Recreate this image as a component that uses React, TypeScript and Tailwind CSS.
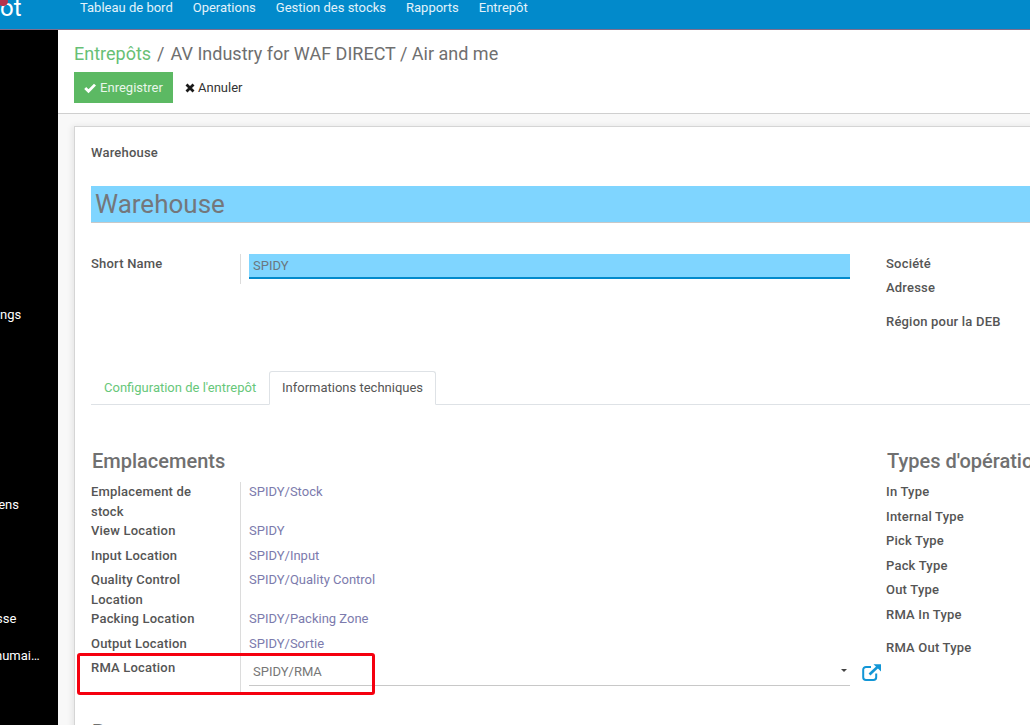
const leftRows = [
    {label: "Emplacement de stock", value: "SPIDY/Stock", height: "h-[39px]"},
    {label: "View Location", value: "SPIDY", height: "h-[25px]"},
    {label: "Input Location", value: "SPIDY/Input", height: "h-[24px]"},
    {label: "Quality Control Location", value: "SPIDY/Quality Control", height: "h-[39px]"},
    {label: "Packing Location", value: "SPIDY/Packing Zone", height: "h-[25px]"},
    {label: "Output Location", value: "SPIDY/Sortie", height: "h-[24px]"},
];

const typeRows = [
    {label: "In Type", height: "h-[25px]"},
    {label: "Internal Type", height: "h-[24px]"},
    {label: "Pick Type", height: "h-[25px]"},
    {label: "Pack Type", height: "h-[24px]"},
    {label: "Out Type", height: "h-[25px]"},
    {label: "RMA In Type", height: "h-[33px]"},
    {label: "RMA Out Type", height: "h-[24px]"},
];

const navItems = ["Tableau de bord", "Operations", "Gestion des stocks", "Rapports", "Entrepôt"];

function Sidebar() {
    return (
        <aside className="w-[58px] shrink-0 bg-black text-white text-[13px] leading-[20px] overflow-hidden">
            <div className="mt-[275px]">ngs</div>
            <div className="mt-[170px] -ml-[5px]">iens</div>
            <div className="mt-[94px] -ml-[4px]">sse</div>
            <div className="mt-[17px] -ml-[5px] whitespace-nowrap">humai…</div>
        </aside>
    );
}

export default function App() {
    return (
        <div className="h-[725px] w-[1030px] overflow-hidden flex flex-col font-['Roboto',sans-serif] text-[13px] text-[#555]">
            <header className="h-[30px] shrink-0 bg-[#028acb] border-b border-[#7f6d8c] flex relative">
                <div className="w-[58px] shrink-0 overflow-hidden relative">
                    <span className="absolute left-0 -top-[7px] text-[24px] leading-[30px] text-white">ot</span>
                    <span className="absolute -left-[2px] -top-[3px] h-[9px] w-[10px] rounded-full bg-[#b5344f]" />
                </div>
                <nav className="flex gap-[20px] pl-[22px] text-[#e3f2fa] text-[13px] leading-[15px]">
                    {navItems.map((item) => (
                        <span key={item}>{item}</span>
                    ))}
                </nav>
            </header>

            <div className="flex flex-1 min-h-0">
                <Sidebar/>
                <main className="flex-1 min-w-0 flex flex-col bg-[#f8f8f8] overflow-hidden">
                    <div className="h-[84px] shrink-0 bg-white border-b border-[#cfcfcf] pl-[16px]">
                        <div className="pt-[12px] text-[18px] leading-[24px] text-[#6f6f6f] whitespace-nowrap">
                            <span className="text-[#67bf76]">Entrepôts</span>
                            <span className="mx-[6px]">/</span>
                            AV Industry for WAF DIRECT / Air and me
                        </div>
                        <div className="mt-[6px] flex items-center">
                            <button className="h-[31px] w-[99px] bg-[#5cb963] text-[#e9f6ea] flex items-center justify-center gap-[4px]">
                                <svg viewBox="0 0 12 12" className="w-[12px] h-[12px]" fill="none" stroke="white" strokeWidth="2.8">
                                    <path d="M1.2 6 4.5 9.3 11 2.6"/>
                                </svg>
                                Enregistrer
                            </button>
                            <button className="ml-[12px] flex items-center gap-[3px] text-[#333]">
                                <svg viewBox="0 0 10 10" className="w-[10px] h-[10px]" fill="none" stroke="#1a1a1a" strokeWidth="2.8">
                                    <path d="M1.5 1.5 8.5 8.5M8.5 1.5 1.5 8.5"/>
                                </svg>
                                Annuler
                            </button>
                        </div>
                    </div>

                    <div className="flex-1 min-h-0 pt-[12px] pl-[16px]">
                        <section className="h-[640px] w-[1000px] bg-white border border-[#d5d5d5] shadow-[-2px_0_6px_rgba(0,0,0,0.08)] pl-[16px] pt-[17px]">
                            <div className="font-medium tracking-[0.2px] leading-[18px]">Warehouse</div>

                            <div className="mt-[24px] h-[37px] bg-[#7fd5ff] border-b border-[#c8c8c8] pl-[4px] text-[26px] leading-[36px] text-[#74777b]">
                                Warehouse
                            </div>

                            <div className="mt-[31px] flex">
                                <div className="w-[150px] shrink-0 h-[30px] border-r border-[#dcdcdc] font-medium tracking-[0.2px] pt-px leading-[18px]">
                                    Short Name
                                </div>
                                <div className="ml-[8px] w-[601px] h-[25px] bg-[#7fd5ff] border-b-2 border-[#028acb] pl-[4px] leading-[24px] text-[#6b7780]">
                                    SPIDY
                                </div>
                                <div className="ml-[36px] pt-px font-medium tracking-[0.2px]">
                                    <div className="leading-[18px]">Société</div>
                                    <div className="mt-[6px] leading-[18px]">Adresse</div>
                                    <div className="mt-[16px] leading-[18px]">Région pour la DEB</div>
                                </div>
                            </div>

                            <div className="mt-[40px] h-[34px] border-b border-[#dee2e6] flex">
                                <div className="w-[178px] pl-[13px] pt-[8px] leading-[18px] text-[#67c77a]">
                                    Configuration de l'entrepôt
                                </div>
                                <div className="h-[34px] w-[167px] border border-[#dee2e6] border-b-white bg-white rounded-t-[3px] pl-[12px] pt-[7px] leading-[17px]">
                                    Informations techniques
                                </div>
                            </div>

                            <div className="mt-[44px] flex">
                                <div className="w-[759px] shrink-0">
                                    <h2 className="pl-px text-[20px] font-medium leading-[24px] text-[#707070]">Emplacements</h2>
                                    <div className="mt-[9px]">
                                        {leftRows.map((row) => (
                                            <div key={row.label} className={`flex ${row.height}`}>
                                                <div className="w-[150px] shrink-0 border-r border-[#dcdcdc] pr-[20px] font-medium tracking-[0.2px] leading-[19.5px]">
                                                    {row.label}
                                                </div>
                                                <div className="pl-[8px] leading-[19.5px] text-[#7c7bad]">{row.value}</div>
                                            </div>
                                        ))}
                                        <div className="flex h-[35px]">
                                            <div className="w-[150px] shrink-0 border-r border-[#dcdcdc] font-medium tracking-[0.2px] leading-[19.5px]">
                                                RMA Location
                                            </div>
                                            <div className="ml-[8px] w-[601px] h-[28px] border-b border-[#c8c8c8] pl-[4px] pr-[3px] pt-[4px] flex justify-between">
                                                <span className="leading-[19px] text-[#777]">SPIDY/RMA</span>
                                                <span className="mt-[7px] h-0 w-0 border-x-[3px] border-t-[3px] border-x-transparent border-t-[#444]" />
                                            </div>
                                        </div>
                                    </div>
                                    <h2 className="mt-[27px] pl-px text-[20px] font-medium leading-[24px] text-[#707070]">Routes</h2>
                                </div>

                                <div className="relative w-[36px] shrink-0">
                                    {/* external link icon next to the RMA select */}
                                    <svg viewBox="0 0 19 17" className="absolute left-[12px] top-[215px] w-[19px] h-[17px]" fill="none" stroke="#1296d6">
                                        <path d="M9 3H4A2.8 2.8 0 0 0 1.2 5.8v7.4A2.8 2.8 0 0 0 4 16h7.4a2.8 2.8 0 0 0 2.8-2.8V9.5" strokeWidth="2"/>
                                        <path d="M7.5 10.5 15.5 3" strokeWidth="2.6"/>
                                        <path d="M11.5 0.3H19V7.5Z" fill="#1296d6" stroke="none"/>
                                    </svg>
                                </div>

                                <div className="whitespace-nowrap">
                                    <h2 className="pl-px text-[20px] font-medium leading-[24px] text-[#707070]">Types d'opération</h2>
                                    <div className="mt-[9px] font-medium tracking-[0.2px]">
                                        {typeRows.map((row) => (
                                            <div key={row.label} className={`${row.height} leading-[19.5px]`}>{row.label}</div>
                                        ))}
                                    </div>
                                </div>
                            </div>
                        </section>
                    </div>
                </main>
            </div>

            {/* annotation drawn on the screenshot */}
            <div className="absolute left-[77px] top-[653px] w-[298px] h-[42px] border-[3px] border-[#f5000f] rounded-[3px]" />
        </div>
    );
}
